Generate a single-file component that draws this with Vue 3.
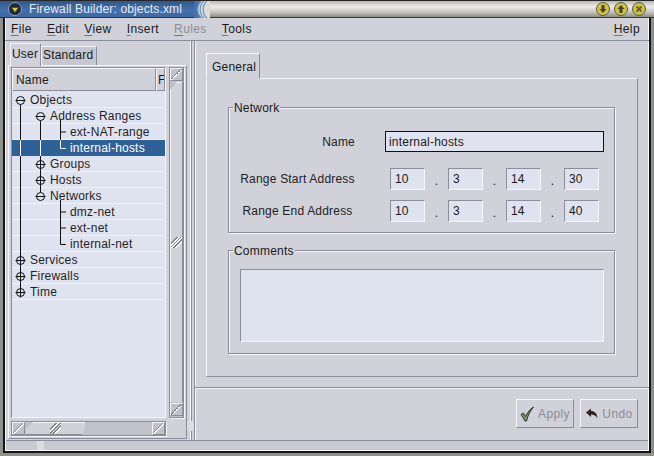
<script setup>
const menus = [
  { first: 'F', rest: 'ile' },
  { first: 'E', rest: 'dit' },
  { first: 'V', rest: 'iew' },
  { first: 'I', rest: 'nsert' },
  { first: 'R', rest: 'ules', off: true },
  { first: 'T', rest: 'ools' }
]

// x of the three tree guide columns
const X = [20, 40, 60]

const rows = [
  { name: 'Objects', depth: 0, open: true, down: [0] },
  { name: 'Address Ranges', depth: 1, open: true, pass: [0], down: [1, 2] },
  { name: 'ext-NAT-range', depth: 2, pass: [0, 1, 2], stub: true },
  { name: 'internal-hosts', depth: 2, pass: [0, 1], last: true, sel: true },
  { name: 'Groups', depth: 1, open: false, pass: [0, 1] },
  { name: 'Hosts', depth: 1, open: false, pass: [0, 1] },
  { name: 'Networks', depth: 1, open: true, pass: [0], up: [1], down: [2] },
  { name: 'dmz-net', depth: 2, pass: [0, 2], stub: true },
  { name: 'ext-net', depth: 2, pass: [0, 2], stub: true },
  { name: 'internal-net', depth: 2, pass: [0], last: true },
  { name: 'Services', depth: 0, open: false, pass: [0] },
  { name: 'Firewalls', depth: 0, open: false, pass: [0] },
  { name: 'Time', depth: 0, open: false, up: [0] }
]

const guides = (r) => {
  let d = ''
  for (const i of r.pass || []) d += `M${X[i] + 0.5} 0V16`
  for (const i of r.up || []) d += `M${X[i] + 0.5} 0V8`
  for (const i of r.down || []) d += `M${X[i] + 0.5} ${i === r.depth ? 8 : 12}V16`
  if (r.stub) d += `M60.5 8H66`
  if (r.last) d += `M60.5 0V8.5H66`
  return d
}

const addresses = [
  { label: 'Range Start Address', parts: ['10', '3', '14', '30'] },
  { label: 'Range End Address', parts: ['10', '3', '14', '40'] }
]
</script>

<template>
  <div class="wm">
    <div class="titlebar">
      <div class="title-left">
        <svg class="menu-ball" width="14" height="14" viewBox="0 0 14 14">
          <circle cx="7" cy="7" r="6.5" fill="#1f2a3c" stroke="#8fa3c2" />
          <path d="M3.5 5.5h7L7 10.5z" fill="#d8cf3c" stroke="#3c3a12" stroke-width=".6" />
        </svg>
        <span class="title-text">Firewall Builder: objects.xml</span>
      </div>
      <svg class="swirl" width="16" height="17" viewBox="0 0 16 17">
        <rect width="16" height="17" fill="#dcdcd6" />
        <path d="M0 0h8C3 4 3 13 8 17H0z" fill="#4470aa" />
        <path d="M7 0C2 4 2 13 7 17M10 0C5 4 5 13 10 17M13 0C8 4 8 13 13 17" fill="none" stroke="#6f93c4" stroke-width="1.2" />
      </svg>
      <div class="title-right">
        <svg v-for="dir in ['down', 'up', 'close']" :key="dir" class="wbtn" width="14" height="14" viewBox="0 0 14 14">
          <circle cx="7" cy="7" r="6.5" fill="#cfc046" stroke="#5a5848" />
          <path v-if="dir === 'down'" d="M5.5 3h3v4h2L7 11 3.500 7h2z" fill="#4a4320" />
          <path v-else-if="dir === 'up'" d="M5.500 11h3V7h2L7 3 3.500 7h2z" fill="#4a4320" />
          <path v-else d="M4.500 4.500l5 5m0-5l-5 5" stroke="#6a6030" stroke-width="1.800" />
        </svg>
      </div>
    </div>

    <div class="frame">
      <div class="menubar">
        <span v-for="m in menus" :key="m.first" class="menu-item" :class="{ off: m.off }"><u>{{ m.first }}</u>{{ m.rest }}</span>
        <span class="menu-item help"><u>H</u>elp</span>
      </div>

      <div class="main">
        <div class="left">
          <div class="left-tabs">
            <div class="ltab active">User</div>
            <div class="ltab">Standard</div>
          </div>
          <div class="left-panel">
            <div class="tree">
              <div class="tree-head">
                <div class="hcell name">Name</div>
                <div class="hcell extra">F</div>
              </div>
              <div class="tree-body">
                <div v-for="r in rows" :key="r.name" class="trow" :class="{ sel: r.sel }">
                  <svg class="tlines" width="100" height="16" viewBox="0 0 100 16">
                    <path :d="guides(r)" fill="none" :stroke="r.sel ? '#fff' : '#111'" />
                    <g v-if="r.open !== undefined" :transform="`translate(${X[r.depth] + 0.5} 8.5)`">
                      <circle r="4" fill="#dfe3ef" stroke="#111" />
                      <path :d="r.open ? 'M-5 0H5' : 'M-5 0H5M0 -5V5'" stroke="#111" />
                    </g>
                  </svg>
                  <span class="tname" :style="{ marginLeft: 18 + r.depth * 20 + 'px' }">{{ r.name }}</span>
                </div>
              </div>
            </div>

            <div class="vscroll">
              <div class="sbtn"></div>
              <div class="vslider"><i class="grip"></i></div>
              <div class="sbtn"></div>
            </div>

            <div class="hscroll">
              <div class="sbtn"></div>
              <div class="hslider"><i class="grip"></i></div>
              <div class="sbtn end"></div>
            </div>
          </div>
        </div>

        <div class="splitter"><i class="split-handle"></i></div>

        <div class="right">
          <div class="right-top">
            <div class="rtab">General</div>
            <div class="tab-panel">
              <div class="group network">
                <span class="legend">Network</span>
                <div class="frow name-row">
                  <label class="flabel right-label">Name</label>
                  <div class="name-input">internal-hosts</div>
                </div>
                <div v-for="a in addresses" :key="a.label" class="frow addr-row">
                  <label class="flabel">{{ a.label }}</label>
                  <div class="addr">
                    <template v-for="(p, i) in a.parts" :key="i">
                      <span v-if="i" class="dot">.</span>
                      <div class="octet">{{ p }}</div>
                    </template>
                  </div>
                </div>
              </div>
              <div class="group comments">
                <span class="legend">Comments</span>
                <div class="textarea"></div>
              </div>
            </div>
          </div>
          <div class="right-bottom">
            <button class="btn">
              <svg width="15" height="16" viewBox="0 0 15 16">
                <path d="M1 8.500l2.500-1.500 2 3.500C7.500 6.500 10 3 13.500 1c-3 3.500-5.500 8-7 14h-1.500C3.500 12.500 2.500 10.500 1 8.500z" fill="#7f8f72" stroke="#20281c" stroke-width=".9" />
              </svg>
              Apply
            </button>
            <button class="btn">
              <svg width="14" height="12" viewBox="0 0 14 12">
                <path d="M1 4.500L6 .5v2.500c3.500 0 6 2 6.500 7.500C11 7.500 9 6.500 6 6.500V9z" fill="#2e2320" />
              </svg>
              Undo
            </button>
          </div>
        </div>
      </div>

      <div class="status"><i class="status-handle"></i></div>
    </div>
  </div>
</template>

<style>
html,
body {
  margin: 0;
  background: #8f8f8c;
}
</style>

<style scoped>
.wm {
  width: 654px;
  height: 456px;
  box-sizing: border-box;
  padding: 0 3px 3px;
  background: #8f8f8c;
  display: flex;
  flex-direction: column;
  font-family: "Liberation Sans", Arial, sans-serif;
  font-size: 12px;
  letter-spacing: 0.2px;
  color: #1a1a1a;
  overflow: hidden;
}

.titlebar {
  height: 18px;
  flex: none;
  margin: 0 -3px;
  display: flex;
  box-sizing: border-box;
  border-top: 1px solid #262626;
}
.title-left {
  width: 194px;
  flex: none;
  display: flex;
  align-items: center;
  padding-left: 8px;
  box-sizing: border-box;
  background: linear-gradient(#2f5688, #4470aa 55%, #3d6aa6);
  border-bottom: 1px solid #1d3556;
}
.title-text {
  margin-left: 7px;
  color: #e6ecf6;
  letter-spacing: 0.15px;
}
.swirl {
  flex: none;
}
.title-right {
  flex: 1;
  display: flex;
  justify-content: flex-end;
  align-items: center;
  gap: 4px;
  padding-right: 8px;
  background: linear-gradient(#b9b9b0, #ecece8 35%, #c4c4bc 70%, #8b8b84);
  border-bottom: 1px solid #3a3a38;
}

.frame {
  flex: 1;
  min-height: 0;
  display: flex;
  flex-direction: column;
  border: solid #161616;
  border-width: 0 2px 2px;
  background: #d0d1d9;
  box-shadow: inset 1px 0 0 #f2f2f6, inset -1px -1px 0 #fbfbfd;
}

.menubar {
  height: 23px;
  flex: none;
  display: flex;
  align-items: center;
  padding: 0 9px 0 6px;
  box-sizing: border-box;
  border-bottom: 1px solid #8c8d9b;
  letter-spacing: 0.4px;
}
.menu-item {
  margin-right: 15px;
}
.menu-item u {
  text-decoration-color: #777;
  text-underline-offset: 2px;
}
.menu-item.off {
  color: #8d8e98;
}
.help {
  margin: 0 0 0 auto;
}

.main {
  flex: 1;
  min-height: 0;
  display: flex;
  padding-left: 1px;
}

.left {
  width: 182px;
  flex: none;
  box-sizing: border-box;
  padding: 2px 1px 1px 2px;
  display: flex;
  flex-direction: column;
}
.left-tabs {
  height: 22px;
  flex: none;
  display: flex;
  align-items: flex-end;
  padding-left: 2px;
  position: relative;
  z-index: 1;
}
.ltab {
  height: 19px;
  box-sizing: border-box;
  padding: 1px 3px 0 1px;
  border: 1px solid;
  border-color: #f6f6fa #8c8d9b #d0d1d9 #f6f6fa;
  border-bottom: none;
  background: #c6c7d0;
}
.ltab.active {
  height: 23px;
  width: 31px;
  margin-bottom: -1px;
  background: #d0d1d9;
  padding: 3px 3px 0 1px;
}
.left-panel {
  flex: 1;
  min-height: 0;
  border: 1px solid;
  border-color: #f6f6fa #8c8d9b #8c8d9b #f6f6fa;
  padding: 1px 2px 2px 2px;
  display: grid;
  grid-template-columns: 155px 15px;
  grid-template-rows: 1fr 15px;
  column-gap: 3px;
  row-gap: 3px;
}

.tree {
  border: 1px solid;
  border-color: #8c8d9b #f6f6fa #f6f6fa #8c8d9b;
  display: flex;
  flex-direction: column;
  min-height: 0;
  overflow: hidden;
}
.tree-head {
  height: 23px;
  flex: none;
  display: flex;
}
.hcell {
  box-sizing: border-box;
  border: 1px solid;
  border-color: #f6f6fa #8c8d9b #8c8d9b #f6f6fa;
  line-height: 23px;
  padding-left: 3px;
  overflow: hidden;
}
.hcell.name {
  width: 144px;
}
.hcell.extra {
  flex: 1;
  padding-left: 1px;
}
.tree-body {
  flex: 1;
  background: #dfe3ef;
  padding-top: 1px;
}
.trow {
  height: 16px;
  box-sizing: border-box;
  position: relative;
  box-shadow: inset 0 -1px 0 #eff1f8;
  line-height: 17px;
  color: #1f1f1f;
}
.trow.sel {
  background: #2f6199;
  color: #fff;
  box-shadow: none;
}
.tlines {
  position: absolute;
  left: -12px;
  top: 0;
  display: block;
}
.tname {
  position: relative;
  display: inline-block;
}

.sbtn {
  width: 11px;
  height: 11px;
  flex: none;
  border: 1px solid;
  border-color: #f6f6fa #8c8d9b #8c8d9b #f6f6fa;
  background: linear-gradient(to top left, transparent 42%, #fff 42%, #fff 50%, #80818e 50%, #80818e 58%, transparent 58%);
}
.vscroll {
  border: 1px solid #8c8d9b;
  background: #c0c1ca;
  display: flex;
  flex-direction: column;
  align-items: center;
  gap: 1px;
  padding-bottom: 1px;
  box-shadow: 1px 1px 0 #f6f6fa;
}
.vslider {
  flex: 1;
  width: 13px;
  display: flex;
  align-items: center;
  justify-content: center;
  background: #d0d1d9;
  border-left: 1px solid #f6f6fa;
  border-right: 1px solid #8c8d9b;
  box-sizing: border-box;
  clip-path: polygon(50% 0, 100% 0, 100% 100%, 0 100%, 0 8px);
  box-shadow: inset 0 1px 0 #f6f6fa;
}
.grip {
  display: block;
  width: 11px;
  height: 11px;
  background: linear-gradient(to top left, transparent 25%, #fff 25%, #fff 33%, #80818e 33%, #80818e 41%, #fff 41%, #fff 50%, #80818e 50%, #80818e 58%, #fff 58%, #fff 66%, #80818e 66%, #80818e 74%, transparent 74%);
}
.hscroll {
  grid-column: 1;
  border: 1px solid #8c8d9b;
  background: #c0c1ca;
  display: flex;
  align-items: center;
  gap: 1px;
  box-shadow: 1px 1px 0 #f6f6fa;
}
.hslider {
  width: 59px;
  height: 13px;
  box-sizing: border-box;
  display: flex;
  align-items: center;
  justify-content: center;
  background: #d0d1d9;
  border-top: 1px solid #f6f6fa;
  border-bottom: 1px solid #8c8d9b;
  clip-path: polygon(7px 0, 100% 0, 100% 50%, 95% 100%, 0 100%, 0 50%);
}
.sbtn.end {
  margin-left: auto;
}

.splitter {
  width: 6px;
  flex: none;
  position: relative;
  background: linear-gradient(to right, transparent 2px, #f6f6fa 2px, #f6f6fa 3px, #8c8d9b 3px, #8c8d9b 4px, transparent 4px);
}
.split-handle {
  position: absolute;
  left: -1px;
  top: 380px;
  width: 7px;
  height: 10px;
  background: #dcdce2;
}

.right {
  flex: 1;
  min-width: 0;
  display: flex;
  flex-direction: column;
  border-left: 1px solid #8c8d9b;
  box-shadow: inset 1px 0 0 #f6f6fa;
}
.right-top {
  height: 347px;
  flex: none;
  box-sizing: border-box;
  border-bottom: 1px solid #8c8d9b;
  box-shadow: 0 1px 0 #f6f6fa;
  padding: 12px 10px 0 11px;
}
.rtab {
  width: 54px;
  height: 26px;
  box-sizing: border-box;
  border: 1px solid;
  border-color: #f6f6fa #8c8d9b transparent #f6f6fa;
  line-height: 26px;
  padding-left: 5px;
  position: relative;
  z-index: 1;
  margin-bottom: -1px;
  background: #d0d1d9;
}
.tab-panel {
  width: 432px;
  height: 299px;
  box-sizing: border-box;
  border: 1px solid;
  border-color: #f6f6fa #8c8d9b #8c8d9b #f6f6fa;
  padding: 28px 22px 0 21px;
  display: flex;
  flex-direction: column;
  gap: 17px;
}
.group {
  position: relative;
  border: 1px solid #8c8d9b;
  box-shadow: 1px 1px 0 #f6f6fa, inset 1px 1px 0 #f6f6fa;
  box-sizing: border-box;
  padding-left: 11px;
}
.legend {
  position: absolute;
  left: 4px;
  top: -7px;
  padding: 0 1px;
  line-height: 15px;
  background: #d0d1d9;
}
.network {
  height: 126px;
  padding-top: 23px;
}
.comments {
  height: 104px;
  padding-top: 18px;
}
.frow {
  display: flex;
  align-items: center;
}
.flabel {
  width: 115px;
  flex: none;
  text-align: center;
  color: #222;
}
.right-label {
  text-align: right;
}
.name-row {
  height: 21px;
  margin-bottom: 16px;
}
.name-input {
  margin-left: 30px;
  width: 219px;
  height: 21px;
  box-sizing: border-box;
  border: 1px solid #111;
  background: #dfe3ef;
  line-height: 20px;
  padding-left: 3px;
}
.addr-row {
  height: 22px;
  margin-bottom: 10px;
}
.addr {
  margin-left: 35px;
  display: flex;
  align-items: center;
}
.octet {
  width: 35px;
  height: 22px;
  box-sizing: border-box;
  border: 1px solid;
  border-color: #8c8d9b #f6f6fa #f6f6fa #8c8d9b;
  background: #dfe3ef;
  line-height: 20px;
  padding-left: 4px;
}
.dot {
  width: 23px;
  text-align: center;
  padding-top: 3px;
}
.textarea {
  width: 364px;
  height: 73px;
  box-sizing: border-box;
  border: 1px solid;
  border-color: #8c8d9b #f6f6fa #f6f6fa #8c8d9b;
  background: #dfe3ef;
}

.right-bottom {
  flex: 1;
  display: flex;
  justify-content: flex-end;
  align-items: flex-start;
  gap: 6px;
  padding: 11px 11px 0 0;
}
.btn {
  width: 58px;
  height: 29px;
  box-sizing: border-box;
  border: 1px solid;
  border-color: #f6f6fa #8c8d9b #8c8d9b #f6f6fa;
  background: #d0d1d9;
  font: inherit;
  letter-spacing: 0.4px;
  color: #8b8c96;
  display: flex;
  align-items: center;
  justify-content: center;
  gap: 3px;
  padding: 0;
}

.status {
  height: 10px;
  flex: none;
  border-top: 1px solid #8c8d9b;
  margin: 0 1px 1px;
  box-sizing: border-box;
  position: relative;
  background: #c8c9d1;
}
.status-handle {
  position: absolute;
  left: 31px;
  top: 0;
  width: 7px;
  height: 9px;
  background: #dcdce2;
}
</style>
